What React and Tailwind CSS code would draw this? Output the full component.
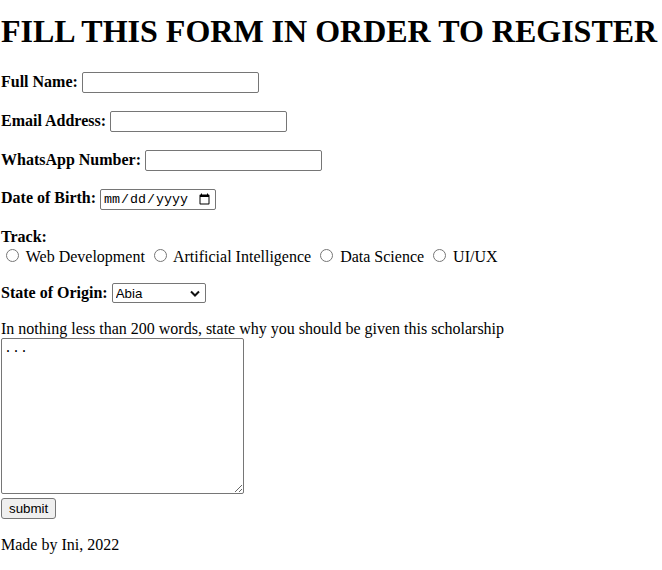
import React from "react";

const inputCls =
  "inline-block align-baseline w-[177px] h-[21px] border border-[#767676] rounded-[2px] px-[2px] py-[1px] text-[13.33px] leading-[normal] font-['Liberation_Sans',Arial,sans-serif] bg-white";

function Radio({ label, name }) {
  return (
    <>
      <input
        type="radio"
        name={name}
        className="m-[3px_3px_0_5px] w-[13px] h-[13px] align-baseline"
      />{" "}
      <span>{label}</span>{" "}
    </>
  );
}

export default function App() {
  return (
    <div className="pl-[1px] font-['Liberation_Serif','Times_New_Roman',serif] text-[16px] leading-[normal] text-black bg-white min-h-[570px]">
      <h1 className="text-[32px] font-bold leading-[normal] mt-[13px] mb-[21px]">
        FILL THIS FORM IN ORDER TO REGISTER
      </h1>
      <form onSubmit={(e) => e.preventDefault()}>
        <p className="my-4 py-[1px]">
          <label className="font-bold">Full Name:</label>{" "}
          <input type="text" className={inputCls} />
        </p>
        <p className="my-4 py-[1px]">
          <label className="font-bold">Email Address:</label>{" "}
          <input type="email" className={inputCls} />
        </p>
        <p className="my-4 py-[1px]">
          <label className="font-bold">WhatsApp Number:</label>{" "}
          <input type="tel" className={inputCls} />
        </p>
        <p className="my-4 py-[1px]">
          <label className="font-bold">Date of Birth:</label>{" "}
          <input
            type="date"
            className="inline-block align-baseline w-[116px] h-[21px] border border-[#767676] rounded-[2px] px-[2px] py-[1px] text-[13.33px] leading-[normal] font-['Liberation_Mono',monospace] bg-white"
          />
        </p>
        <p className="my-4 pt-[1px]">
          <label className="font-bold">Track:</label>
          <br />
          <Radio name="track" label="Web Development" />
          <Radio name="track" label="Artificial Intelligence" />
          <Radio name="track" label="Data Science" />
          <Radio name="track" label="UI/UX" />
        </p>
        <p className="my-4 py-[1px]">
          <label className="font-bold">State of Origin:</label>{" "}
          <span className="relative inline-block align-baseline">
            <select className="appearance-none block w-[94px] h-[20px] border border-[#767676] rounded-[2px] pl-[3px] pr-[20px] text-[13.33px] leading-[normal] font-['Liberation_Sans',Arial,sans-serif] bg-white">
              <option>Abia</option>
              <option>Adamawa</option>
              <option>Akwa Ibom</option>
              <option>Anambra</option>
            </select>
            <svg
              className="absolute right-[6px] top-[7px] pointer-events-none"
              width="10"
              height="7"
              viewBox="0 0 10 7"
            >
              <path
                d="M1 1.5 L5 5.5 L9 1.5"
                fill="none"
                stroke="#111"
                strokeWidth="2"
              />
            </svg>
          </span>
        </p>
        <p className="mt-4">
          In nothing less than 200 words, state why you should be given this
          scholarship
        </p>
        <textarea
          defaultValue="..."
          className="block w-[243px] h-[156px] border border-[#767676] rounded-[2px] p-[2px] text-[13.33px] leading-[normal] font-['Liberation_Mono',monospace] bg-white mb-[4px]"
        />
        <button
          type="submit"
          className="block h-[21px] px-[7px] border border-[#767676] rounded-[3px] bg-[#efefef] text-[13.33px] leading-[normal] font-['Liberation_Sans',Arial,sans-serif]"
        >
          submit
        </button>
      </form>
      <p className="mt-[17px] mb-4">Made by Ini, 2022</p>
    </div>
  );
}
